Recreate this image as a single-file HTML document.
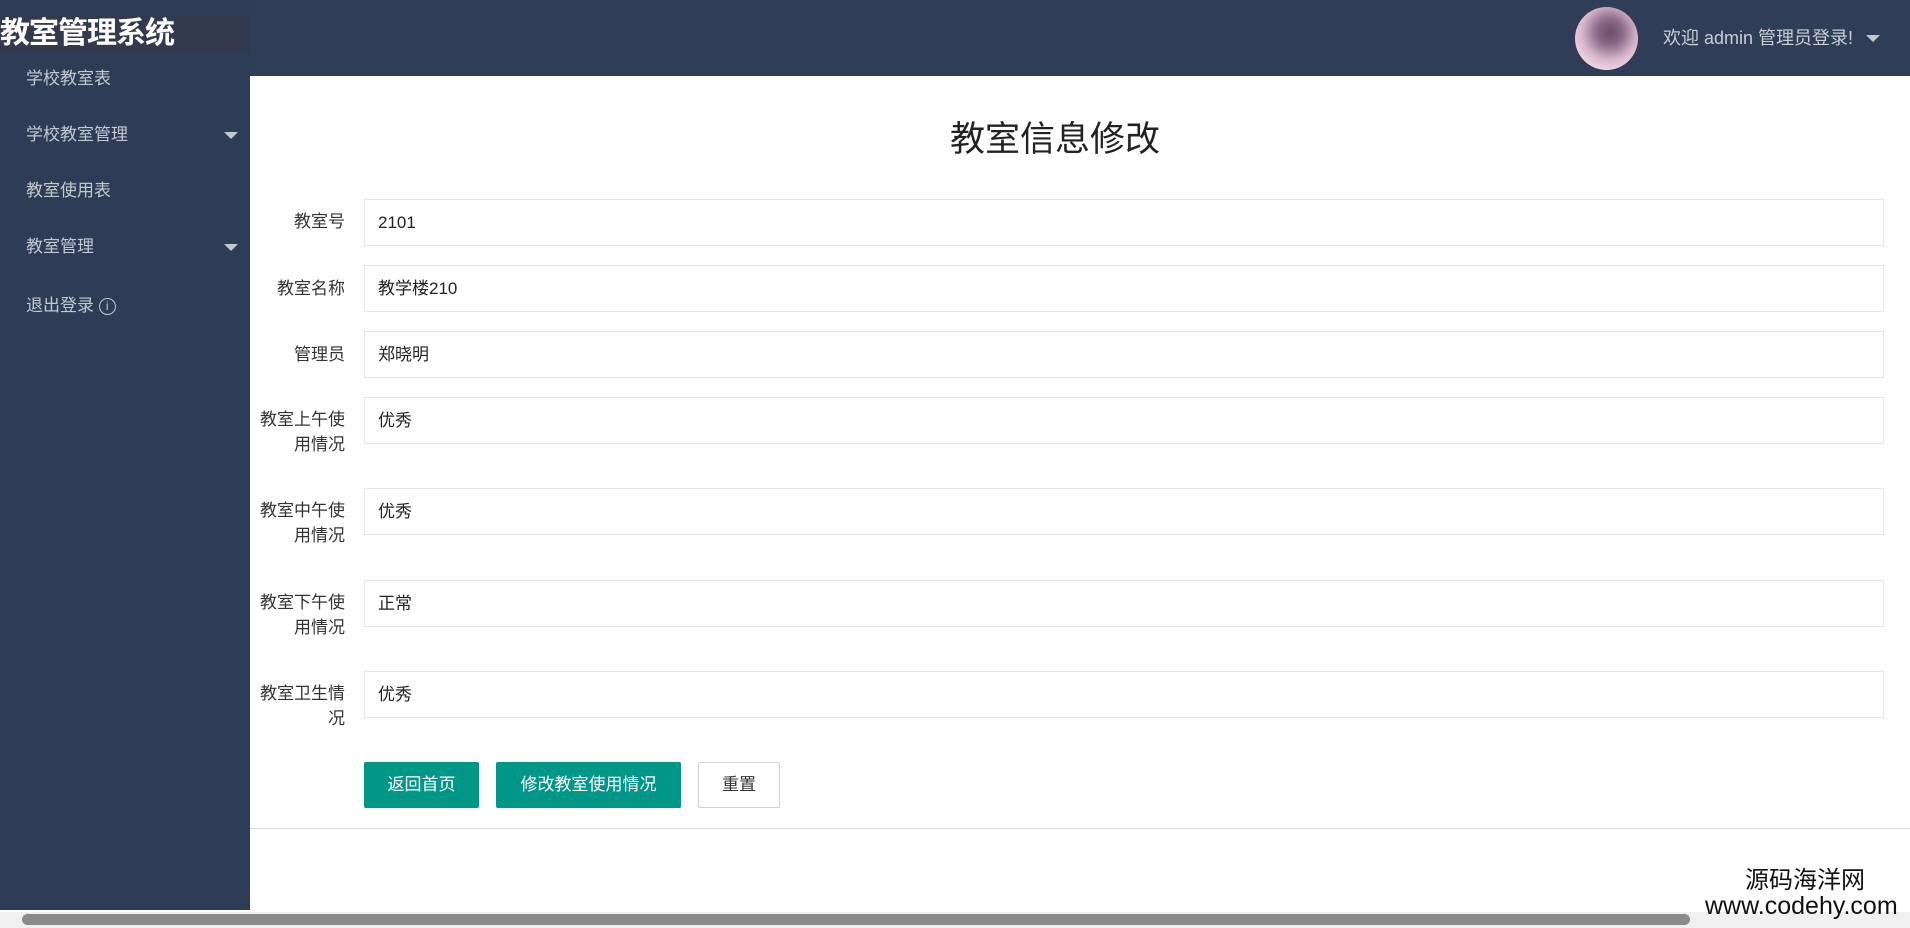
<!DOCTYPE html>
<html><head><meta charset="utf-8"><style>
*{margin:0;padding:0;box-sizing:border-box}
body{width:1910px;height:928px;overflow:hidden;background:#fff;font-family:"Liberation Sans","Noto Sans CJK SC",sans-serif;position:relative}
.hdr{position:absolute;left:0;top:0;width:1910px;height:76px;background:#2f3e56}
.side{position:absolute;left:0;top:0;width:250px;height:910px;background:#2e3d55}
.logo{position:absolute;left:0;top:15px;width:250px;height:37px;background:#343a4e;color:#fff;font-weight:bold;font-size:30px;line-height:37px;letter-spacing:-1px}
.mi{position:absolute;left:26px;color:#c2c8d2;font-size:17px;line-height:20px}
.arr{position:absolute;left:224px;width:0;height:0;border-left:7px solid transparent;border-right:7px solid transparent;border-top:7px solid #c2c8d2}
.av{position:absolute;left:1575px;top:7px;width:63px;height:63px;border-radius:50%;background:radial-gradient(circle at 55% 40%,#6b4c6a 0,#8a6a86 25%,#d9b8cf 55%,#f0dde6 80%)}
.wel{position:absolute;left:1663px;top:27px;color:#c8cdd6;font-size:18px;line-height:22px}
.h1{position:absolute;left:855px;width:400px;top:118px;text-align:center;font-size:35px;color:#222;line-height:44px}
.lb{position:absolute;right:1565px;text-align:right;font-size:17px;color:#333;line-height:25px}
.in{position:absolute;left:364px;width:1520px;height:47px;border:1px solid #e6e6e6;font-size:17px;color:#222;padding-left:13px;line-height:45px}
.btn{position:absolute;top:762px;height:46px;background:#009688;color:#fff;font-size:17px;line-height:46px;text-align:center;border-radius:2px}
</style></head><body>
<div class="hdr"></div>
<div class="side"></div>
<div class="logo">教室管理系统</div>
<div class="mi" style="top:69px">学校教室表</div>
<div class="mi" style="top:125px">学校教室管理</div><div class="arr" style="top:132px"></div>
<div class="mi" style="top:181px">教室使用表</div>
<div class="mi" style="top:237px">教室管理</div><div class="arr" style="top:244px"></div>
<div class="mi" style="top:296px">退出登录 <span style="display:inline-block;width:17px;height:17px;border:1.5px solid #c2c8d2;border-radius:50%;font-size:12px;line-height:14px;text-align:center;vertical-align:1px">i</span></div>
<div class="av"></div>
<div class="wel">欢迎 admin 管理员登录!</div>
<div class="arr" style="left:1866px;top:35px"></div>
<div class="h1">教室信息修改</div>
<div class="lb" style="top:209px">教室号</div><div class="in" style="top:199px">2101</div>
<div class="lb" style="top:276px">教室名称</div><div class="in" style="top:265px">教学楼210</div>
<div class="lb" style="top:342px">管理员</div><div class="in" style="top:331px">郑晓明</div>
<div class="lb" style="top:407px">教室上午使<br>用情况</div><div class="in" style="top:397px">优秀</div>
<div class="lb" style="top:498px">教室中午使<br>用情况</div><div class="in" style="top:488px">优秀</div>
<div class="lb" style="top:590px">教室下午使<br>用情况</div><div class="in" style="top:580px">正常</div>
<div class="lb" style="top:681px">教室卫生情<br>况</div><div class="in" style="top:671px">优秀</div>
<div class="btn" style="left:364px;width:115px">返回首页</div>
<div class="btn" style="left:496px;width:185px">修改教室使用情况</div>
<div class="btn" style="left:698px;width:82px;background:#fff;color:#333;border:1px solid #d2d2d2;line-height:44px">重置</div>
<div style="position:absolute;left:250px;top:828px;width:1660px;height:1px;background:#d8d8d8"></div>
<div style="position:absolute;left:0;top:912px;width:1910px;height:16px;background:#f0f0f0"></div>
<div style="position:absolute;left:22px;top:914px;width:1668px;height:11px;background:#8a8a8a;border-radius:6px"></div>
<div style="position:absolute;left:1745px;top:868px;font-size:24px;color:#111;line-height:26px">源码海洋网</div>
<div style="position:absolute;left:1705px;top:893px;font-size:25px;color:#111;line-height:26px">www.codehy.com</div>
</body></html>
